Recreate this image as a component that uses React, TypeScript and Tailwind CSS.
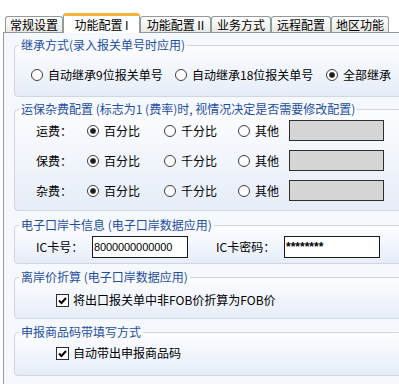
import React from 'react';

const font = "font-['Noto_Sans_CJK_SC','Liberation_Sans',sans-serif]";

function Radio({ checked }: { checked?: boolean }) {
  return (
    <span className="w-[12px] h-[12px] rounded-full border border-[#3c3c3c] bg-white flex items-center justify-center shrink-0">
      {checked && <span className="w-[6px] h-[6px] rounded-full bg-[radial-gradient(circle,#1a1a1a_0%,#1a1a1a_40%,#9a9a9a_100%)]" />}
    </span>
  );
}

function Option({ label, checked, className }: { label: string; checked?: boolean; className: string }) {
  return (
    <div className={`flex items-center gap-[5px] h-[16px] shrink-0 ${className}`}>
      <Radio checked={checked} />
      <span className="leading-[16px] whitespace-nowrap">{label}</span>
    </div>
  );
}

function Check({ label }: { label: string }) {
  return (
    <div className="flex items-center gap-[4px] h-[16px]">
      <span className="w-[13px] h-[13px] border border-[#2a2a2a] bg-white flex items-center justify-center shrink-0">
        <svg width="11" height="11" viewBox="0 0 11 11">
          <path d="M2 5.5 L4.5 8 L9 3" fill="none" stroke="#000" strokeWidth="2" />
        </svg>
      </span>
      <span className="leading-[16px] whitespace-nowrap">{label}</span>
    </div>
  );
}

function Group({ title, className, children }: { title: string; className: string; children: React.ReactNode }) {
  return (
    <fieldset className={`w-[400px] shrink-0 border border-[#d2d6de] rounded-[4px] bg-gradient-to-b from-[#fcfdff] to-[#e6edf8] ${className}`}>
      <legend className="ml-[4px] px-[2px] leading-[14px] text-[#1f4f9f] whitespace-nowrap">{title}</legend>
      {children}
    </fieldset>
  );
}

const tabs = [
  { label: '常规设置', w: 'w-[58px]' },
  { label: '功能配置 I', w: 'w-[77px]', active: true },
  { label: '功能配置 II', w: 'w-[71px]' },
  { label: '业务方式', w: 'w-[60px]' },
  { label: '远程配置', w: 'w-[60px]' },
  { label: '地区功能', w: 'w-[58px]' },
];

function FeeRow({ name }: { name: string }) {
  return (
    <div className="flex items-center h-[21px] pl-[21px]">
      <span className="w-[51px] shrink-0 leading-[16px]">{name}</span>
      <Option label="百分比" checked className="w-[77px]" />
      <Option label="千分比" className="w-[74px]" />
      <Option label="其他" className="w-[51px]" />
      <div className="w-[95px] h-[21px] shrink-0 border border-[#2e2e2e] bg-[#d6d6d6]" />
    </div>
  );
}

export default function App() {
  return (
    <div className={`w-[399px] h-[384px] overflow-hidden bg-white text-[12px] text-black ${font}`}>
      <div className="flex items-end h-[32px] pl-[5px]">
        {tabs.map((t) =>
          t.active ? (
            <div
              key={t.label}
              className={`${t.w} h-[20px] -mb-px relative z-10 shrink-0 bg-white border-x border-[#919b9c] border-t-[3px] border-t-[#f5b43c] rounded-t-[3px] flex items-center justify-center leading-[16px] whitespace-nowrap`}
            >
              {t.label}
            </div>
          ) : (
            <div
              key={t.label}
              className={`${t.w} h-[16px] shrink-0 bg-gradient-to-b from-white to-[#e8e8e4] border-x border-t border-[#919b9c] rounded-t-[3px] flex items-center justify-center leading-[14px] whitespace-nowrap`}
            >
              {t.label}
            </div>
          )
        )}
      </div>

      <div className="ml-[3px] w-[420px] h-[352px] border-l border-t border-[#919b9c] bg-[#f5f8fd] pl-[10px] pt-[5px] flex flex-col">
        <Group title="继承方式(录入报关单号时应用)" className="h-[59px]">
          <div className="flex items-center mt-[15px] pl-[16px]">
            <Option label="自动继承9位报关单号" className="w-[144px]" />
            <Option label="自动继承18位报关单号" className="w-[151px]" />
            <Option label="全部继承" checked className="w-[80px]" />
          </div>
        </Group>

        <Group title="运保杂费配置 (标志为1 (费率)时, 视情况决定是否需要修改配置)" className="h-[109px] mt-[5px]">
          <div className="flex flex-col gap-[9px] mt-[4px]">
            <FeeRow name="运费：" />
            <FeeRow name="保费：" />
            <FeeRow name="杂费：" />
          </div>
        </Group>

        <Group title="电子口岸卡信息 (电子口岸数据应用)" className="h-[46px] mt-[7px]">
          <div className="flex items-center mt-[4px] pl-[21px]">
            <span className="w-[56px] shrink-0 leading-[16px]">IC卡号：</span>
            <div className="w-[96px] h-[22px] shrink-0 border border-[#1a1a1a] bg-white flex items-center pl-[1px] font-['Liberation_Sans',sans-serif] text-[11px] tracking-[-0.1px]">
              8000000000000
            </div>
            <span className="w-[68px] ml-[28px] shrink-0 leading-[16px]">IC卡密码：</span>
            <div className="w-[96px] h-[22px] shrink-0 border border-[#1a1a1a] bg-white flex items-center pl-[1px] font-['Liberation_Sans',sans-serif] text-[12px] font-bold">
              ********
            </div>
          </div>
        </Group>

        <Group title="离岸价折算 (电子口岸数据应用)" className="h-[49px] mt-[6px]">
          <div className="mt-[8px] pl-[41px]">
            <Check label="将出口报关单中非FOB价折算为FOB价" />
          </div>
        </Group>

        <Group title="申报商品码带填写方式" className="h-[51px] mt-[6px]">
          <div className="mt-[6px] pl-[41px]">
            <Check label="自动带出申报商品码" />
          </div>
        </Group>
      </div>
    </div>
  );
}
